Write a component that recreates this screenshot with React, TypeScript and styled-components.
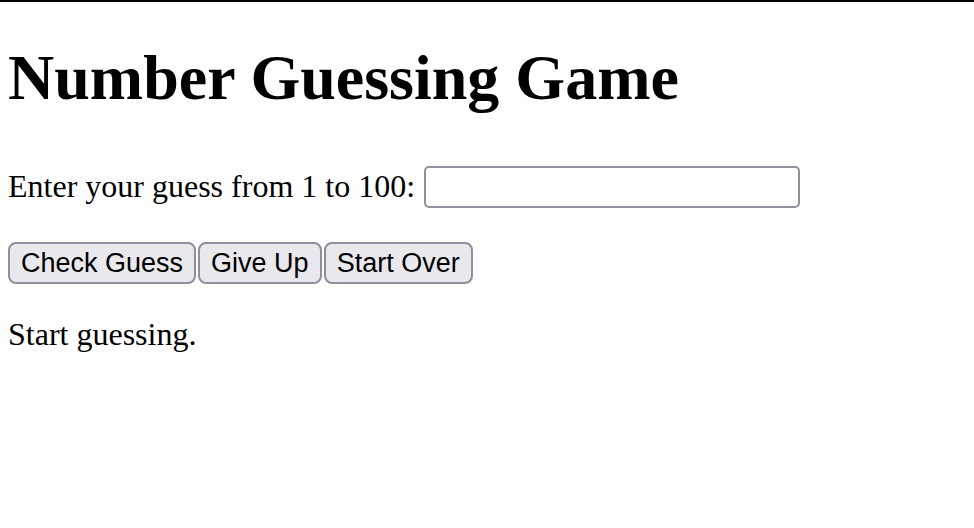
import React from "react";
import styled, { createGlobalStyle } from "styled-components";

const Global = createGlobalStyle`
  html, body { margin: 0; padding: 0; background: #fff; }
  body { font-family: "Liberation Serif", "Times New Roman", serif; color: #000; }
`;

const Page = styled.div`
  border-top: 2px solid #000;
  padding: 0 8px;
  min-height: 526px;
`;

const Title = styled.h1`
  margin: 40px 0 0;
  font-family: "Liberation Serif", "Times New Roman", serif;
  font-size: 64px;
  font-weight: bold;
  line-height: 72px;
`;

const GuessRow = styled.div`
  display: flex;
  align-items: flex-start;
  gap: 9px;
  margin-top: 51.6px;
  height: 42px;
`;

const Label = styled.label`
  font-size: 32px;
  line-height: 36px;
  padding-top: 2px;
`;

const GuessInput = styled.input`
  box-sizing: border-box;
  width: 376px;
  height: 42px;
  border: 2px solid #8f8f9d;
  border-radius: 5px;
  background: #fff;
  padding: 2px 4px;
  font-size: 26px;
  font-family: "Liberation Sans", Arial, sans-serif;
  outline: none;
`;

const ButtonRow = styled.div`
  display: flex;
  gap: 2px;
  margin-top: 34px;
`;

const Button = styled.button`
  box-sizing: border-box;
  height: 42px;
  padding: 0 11px;
  border: 2px solid #8f8f9d;
  border-radius: 8px;
  background: #e9e9ed;
  color: #000;
  font-family: "Liberation Sans", Arial, sans-serif;
  font-size: 27px;
  line-height: 38px;
  cursor: pointer;
`;

const Status = styled.p`
  margin: 32px 0 0;
  font-size: 32px;
  line-height: 36px;
`;

export default function App() {
  return (
    <>
      <Global />
      <Page>
        <Title>Number Guessing Game</Title>
        <GuessRow>
          <Label htmlFor="guess">Enter your guess from 1 to 100:</Label>
          <GuessInput id="guess" type="text" />
        </GuessRow>
        <ButtonRow>
          <Button>Check Guess</Button>
          <Button>Give Up</Button>
          <Button>Start Over</Button>
        </ButtonRow>
        <Status>Start guessing.</Status>
      </Page>
    </>
  );
}
